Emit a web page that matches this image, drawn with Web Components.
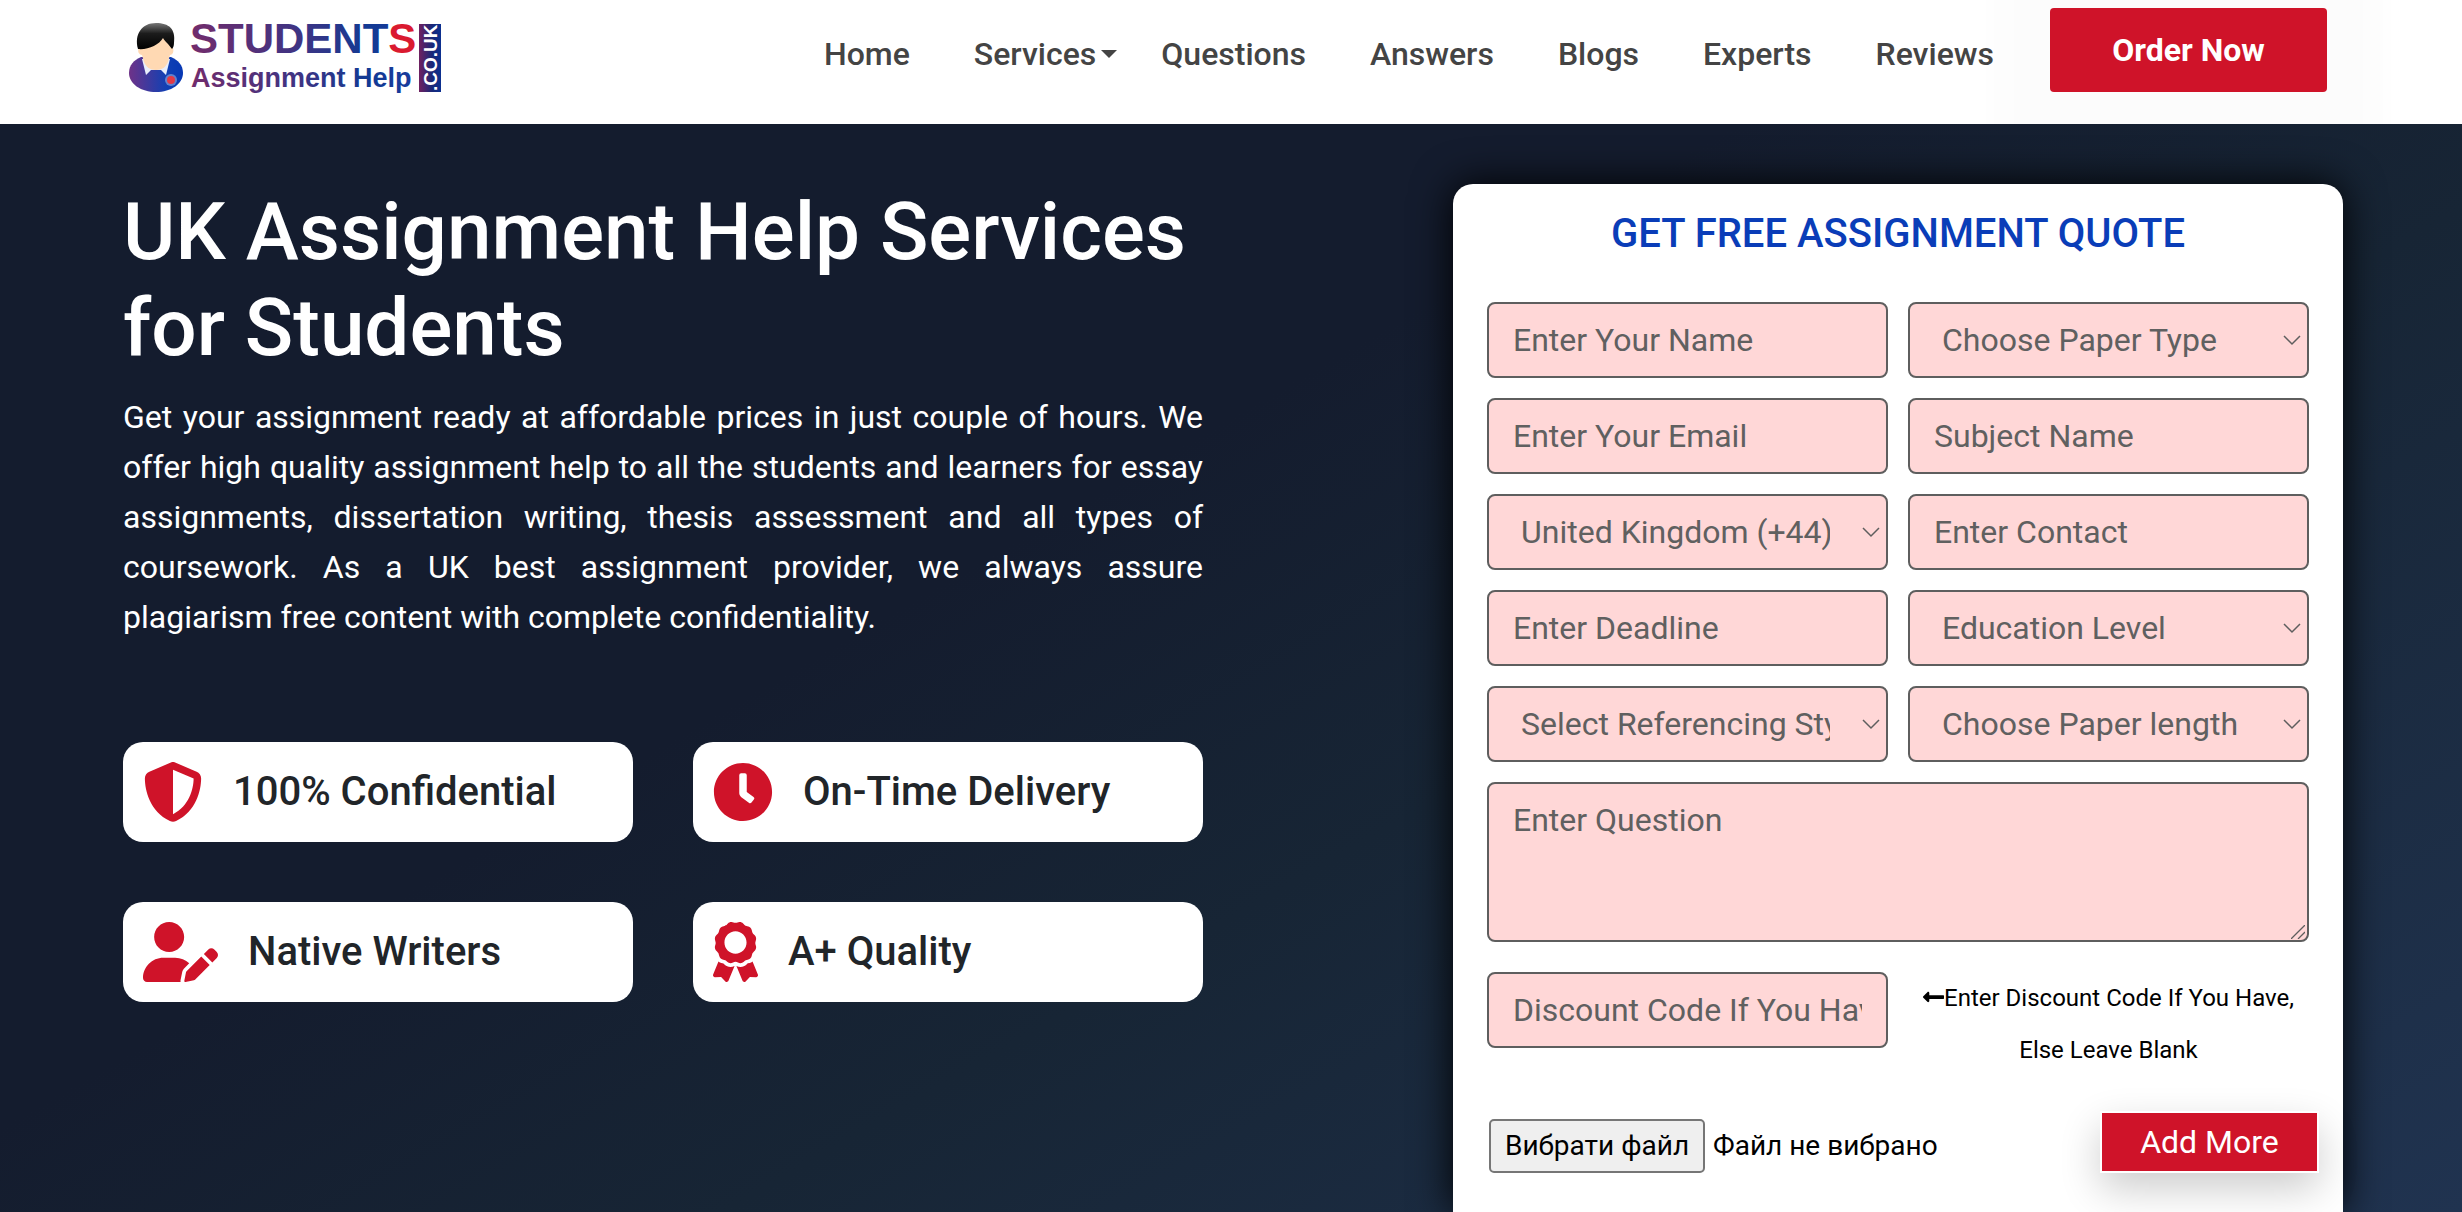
<!DOCTYPE html>
<html lang="en">
<head>
  <meta charset="utf-8">
  <meta name="viewport" content="width=device-width, initial-scale=1">
  <title>UK Assignment Help Services for Students</title>
  <style>
    :root {
      --red: #cf1329;
      --blue: #0a3db8;
      --ink: #212529;
      --field: #ffd7d7;
      --field-line: #5e5e5e;
    }
    body {
      margin: 0;
      min-height: 100vh;
      display: flex;
      flex-direction: column;
      font-family: Roboto, "Liberation Sans", sans-serif;
      background: #fff;
    }
  </style>
</head>
<body>
  <site-header>
    <nav-link href="#home">Home</nav-link>
    <nav-link href="#services" caret>Services</nav-link>
    <nav-link href="#questions">Questions</nav-link>
    <nav-link href="#answers">Answers</nav-link>
    <nav-link href="#blogs">Blogs</nav-link>
    <nav-link href="#experts">Experts</nav-link>
    <nav-link href="#reviews">Reviews</nav-link>
  </site-header>

  <hero-section>
    <span slot="title">UK Assignment Help Services for Students</span>
    <span slot="text">Get your assignment ready at affordable prices in just couple of hours. We offer high quality assignment help to all the students and learners for essay assignments, dissertation writing, thesis assessment and all types of coursework. As a UK best assignment provider, we always assure plagiarism free content with complete confidentiality.</span>
    <feature-card slot="features" icon="shield">100% Confidential</feature-card>
    <feature-card slot="features" icon="clock">On-Time Delivery</feature-card>
    <feature-card slot="features" icon="writer">Native Writers</feature-card>
    <feature-card slot="features" icon="award">A+ Quality</feature-card>
    <quote-form slot="form"></quote-form>
  </hero-section>

  <script>
    const icons = {
      shield: {
        width: 512,
        path: 'M256 0c4.6 0 9.2 1 13.4 2.9L457.7 82.8c22 9.3 38.4 31 38.3 57.2c-.5 99.2-41.3 280.7-213.6 363.2c-16.7 8-36.1 8-52.8 0C57.3 420.7 16.5 239.2 16 140c-.1-26.2 16.3-47.9 38.3-57.2L242.7 2.9C246.8 1 251.4 0 256 0zm0 66.8V444.8C394 378 431.1 230.1 432 141.4L256 66.8z'
      },
      clock: {
        width: 512,
        path: 'M256 8C119 8 8 119 8 256S119 504 256 504 504 393 504 256 393 8 256 8zm92.49 313l-20 25a16 16 0 0 1-22.49 2.5l-67-49.72a40 40 0 0 1-15-31.23V112a16 16 0 0 1 16-16h32a16 16 0 0 1 16 16V256l58 42.5a16 16 0 0 1 2.49 22.5z'
      },
      writer: {
        width: 640,
        path: 'M223.1 256c70.7 0 128-57.3 128-128s-57.3-128-128-128C152.4 0 95.1 57.3 95.1 128S152.4 256 223.1 256zM274.7 304H173.3C77.61 304 0 381.7 0 477.4C0 496.5 15.52 512 34.66 512h286.4c-1.246-5.531-1.43-11.31-.2832-17.04l14.28-71.41c1.943-9.723 6.676-18.56 13.68-25.56l45.72-45.72C363.3 322.4 321.2 304 274.7 304zM371.8 420.4c-2.514 2.512-4.227 5.715-4.924 9.203l-14.28 71.41c-1.258 6.289 4.293 11.84 10.59 10.59l71.42-14.29c3.482-.6992 6.682-2.406 9.195-4.922l125.3-125.3l-72.01-72.01L371.8 420.4zM629.5 255.7l-21.1-21.11c-14.06-14.06-36.85-14.06-50.91 0l-38.13 38.14l72.01 72.01l38.13-38.13C643.5 292.5 643.5 269.7 629.5 255.7z'
      },
      award: {
        width: 384,
        path: 'M97.12 362.63c-8.69-8.69-4.16-6.24-25.12-11.85-9.51-2.55-17.87-7.45-25.43-13.32L1.2 448.7c-4.39 10.77 3.81 22.47 15.43 22.03l52.69-2.01L105.56 507c8 8.44 22.04 5.81 26.43-4.96l52.05-127.62c-10.84 6.04-22.87 9.58-35.31 9.58-19.5 0-37.82-7.59-51.61-21.37zM382.8 448.7l-45.37-111.24c-7.56 5.88-15.92 10.77-25.43 13.32-21.07 5.64-16.45 3.18-25.12 11.85-13.79 13.78-32.12 21.37-51.62 21.37-12.44 0-24.47-3.55-35.31-9.58L252 502.04c4.39 10.77 18.44 13.4 26.43 4.96l36.25-38.28 52.69 2.01c11.62.44 19.82-11.27 15.43-22.03zM263 340c15.28-15.55 17.03-14.21 38.79-20.14 13.89-3.79 24.75-14.84 28.47-28.98 7.48-28.4 5.54-24.97 25.95-45.75 10.17-10.35 14.14-25.44 10.42-39.58-7.47-28.38-7.48-24.42 0-52.83 3.72-14.14-.25-29.23-10.42-39.58-20.41-20.78-18.47-17.36-25.95-45.75-3.72-14.14-14.58-25.19-28.47-28.98-27.88-7.61-24.52-5.62-44.95-26.41-10.17-10.35-25-14.4-38.89-10.61-27.87 7.6-23.98 7.61-51.9 0-13.89-3.79-28.72.25-38.89 10.61-20.41 20.78-17.05 18.8-44.94 26.41-13.89 3.79-24.75 14.84-28.47 28.98-7.47 28.39-5.54 24.97-25.95 45.75-10.17 10.35-14.15 25.44-10.42 39.58 7.47 28.36 7.48 24.4 0 52.82-3.72 14.14.25 29.23 10.42 39.59 20.41 20.78 18.47 17.35 25.95 45.75 3.72 14.14 14.58 25.19 28.47 28.98C104.6 325.96 106.27 325 121 340c13.23 13.47 33.84 15.88 49.74 5.82a39.676 39.676 0 0 1 42.53 0c15.89 10.06 36.5 7.65 49.73-5.82zM97.66 175.96c0-53.03 42.24-96.02 94.34-96.02s94.34 42.99 94.34 96.02-42.24 96.02-94.34 96.02-94.34-42.99-94.34-96.02z'
      }
    };

    // Shared base: every element renders its template into an open shadow root
    class BaseElement extends HTMLElement {

      constructor() {

        super();
        this.attachShadow({ mode: 'open' });
      }

      connectedCallback() {

        const template = document.createElement('template');
        template.innerHTML = `
          <style>
            * { box-sizing: border-box; }
            ${this.getStyle()}
          </style>
          ${this.getMarkup()}
        `;
        this.shadowRoot.replaceChildren(template.content.cloneNode(true));
      }
    }

    class SiteLogo extends BaseElement {

      getStyle() {

        return `
          :host { display: block; }
          a { display: block; }
          svg { display: block; overflow: visible; }
          text { font-family: "Liberation Sans", Arial, sans-serif; font-weight: 700; }
        `;
      }

      getMarkup() {

        return `
          <a href="#home" aria-label="Students Assignment Help">
            <svg width="324" height="96" viewBox="0 -12 324 96">
              <defs>
                <linearGradient id="word" gradientUnits="userSpaceOnUse" x1="68" y1="0" x2="290" y2="0">
                  <stop offset="0" stop-color="#722c6c"/>
                  <stop offset=".5" stop-color="#3c3484"/>
                  <stop offset=".8" stop-color="#123a94"/>
                  <stop offset="1" stop-color="#1a3a9c"/>
                </linearGradient>
                <linearGradient id="coat">
                  <stop offset="0" stop-color="#6e3288"/>
                  <stop offset=".7" stop-color="#1040b4"/>
                  <stop offset="1" stop-color="#0838b4"/>
                </linearGradient>
                <linearGradient id="tag">
                  <stop offset="0" stop-color="#702060"/>
                  <stop offset=".6" stop-color="#182878"/>
                  <stop offset="1" stop-color="#0c3090"/>
                </linearGradient>
                <linearGradient id="hair" x1="0" y1="0" x2="0" y2="1">
                  <stop offset="0" stop-color="#777"/>
                  <stop offset=".4" stop-color="#1c1c1c"/>
                  <stop offset="1" stop-color="#000"/>
                </linearGradient>
              </defs>
              <path d="M6 53C6 45 11 40 18 37H48C55 40 60 45 60 53C60 64 48 72 33 72S6 64 6 53z" fill="url(#coat)"/>
              <path d="M19 39l4 16 5-5h10l5 5 4-16z" fill="#e8eefc"/>
              <path d="M16 28c-2 3 0 7 3 7l2 7c2 5 6 8 12 8s10-3 12-8l2-7c3 0 4-4 3-7l-4-12H20z" fill="#ffd9b3"/>
              <path d="M15 29C11 14 19 3 33 3c13 0 20 6 18 20 0 3-1 5-2 6l-4-5c-2-2-4-4-5-6-4 7-15 12-25 11z" fill="url(#hair)"/>
              <circle cx="48" cy="60" r="6" fill="#fff" opacity=".35"/>
              <circle cx="48" cy="60" r="4" fill="#e23a48"/>
              <text x="67" y="33" font-size="42" fill="url(#word)">STUDENT<tspan fill="#da1a30">S</tspan></text>
              <text x="68" y="67" font-size="27" fill="url(#word)">Assignment Help</text>
              <rect x="296" y="4" width="22" height="68" fill="url(#tag)"/>
              <text transform="translate(314 71) rotate(-90)" font-size="19" fill="#fff">.CO.UK</text>
            </svg>
          </a>
        `;
      }
    }

    class NavLink extends BaseElement {

      getStyle() {

        return `
          :host { display: block; }
          a {
            display: flex;
            align-items: center;
            padding: 0 32px;
            color: #444;
            font-size: 32px;
            font-weight: 500;
            line-height: 48px;
            text-decoration: none;
          }
          :host([caret]) a { gap: 5px; padding-right: 12px; }
          :host([caret]) a::after {
            content: "";
            border: 8px solid transparent;
            border-top-color: #444;
            border-bottom: 0;
          }
        `;
      }

      getMarkup() {

        return `<a href="${this.getAttribute('href')}"><slot></slot></a>`;
      }
    }

    class SiteHeader extends BaseElement {

      getStyle() {

        return `
          :host { display: block; background: #fff; }
          header {
            display: flex;
            align-items: flex-start;
            min-height: 124px;
            padding: 8px 135px 0 123px;
            overflow: hidden;
          }
          nav { display: flex; margin: 22px 24px 0 auto; }
          button {
            width: 277px;
            height: 84px;
            border: 0;
            border-radius: 4px;
            background: var(--red);
            color: #fff;
            font: 700 32px/48px Roboto, sans-serif;
            box-shadow: 0 16px 20px 60px rgba(0, 0, 0, .01);
          }
        `;
      }

      getMarkup() {

        return `
          <header>
            <site-logo></site-logo>
            <nav><slot></slot></nav>
            <button type="button">Order Now</button>
          </header>
        `;
      }
    }

    class HeroSection extends BaseElement {

      getStyle() {

        return `
          :host {
            display: flex;
            flex: 1;
            background: linear-gradient(150deg, #141c2e 40%, #172535 60%, #203350);
          }
          section {
            flex: 1;
            display: grid;
            grid-template-columns: 1080fr 890fr;
            gap: 250px;
            padding: 60px 119px 0 123px;
            color: #fff;
          }
          h1 {
            margin: 0 0 16px;
            font-size: 80px;
            font-weight: 500;
            line-height: 96px;
          }
          p {
            margin: 0;
            font-size: 32px;
            line-height: 50px;
            text-align: justify;
          }
          .features {
            display: grid;
            grid-template-columns: 1fr 1fr;
            gap: 60px;
            margin-top: 100px;
          }
          .form { display: grid; }
        `;
      }

      getMarkup() {

        return `
          <section>
            <div>
              <h1><slot name="title"></slot></h1>
              <p><slot name="text"></slot></p>
              <div class="features"><slot name="features"></slot></div>
            </div>
            <div class="form"><slot name="form"></slot></div>
          </section>
        `;
      }
    }

    class FeatureCard extends BaseElement {

      getStyle() {

        return `
          :host {
            display: flex;
            align-items: center;
            gap: 30px;
            min-height: 100px;
            padding: 0 20px;
            box-sizing: border-box;
            border-radius: 20px;
            background: #fff;
            color: var(--ink);
            font-size: 40px;
            font-weight: 500;
            line-height: 48px;
          }
          svg { height: 60px; fill: var(--red); }
        `;
      }

      getMarkup() {

        const icon = icons[this.getAttribute('icon')];

        return `
          <svg viewBox="0 0 ${icon.width} 512" aria-hidden="true"><path d="${icon.path}"/></svg>
          <span><slot></slot></span>
        `;
      }
    }

    const fieldStyle = `
      :host { display: grid; }
      input, select, textarea {
        grid-area: 1 / 1;
        width: 100%;
        min-width: 0;
        height: 76px;
        margin: 0;
        padding: 12px 24px;
        border: 2px solid var(--field-line);
        border-radius: 8px;
        background: var(--field);
        color: #606060;
        font: 400 32px/48px Roboto, sans-serif;
      }
      ::placeholder { color: #606060; opacity: 1; }
    `;

    class TextField extends BaseElement {

      getStyle() {

        return `
          ${fieldStyle}
          textarea { height: 160px; resize: none; }
          svg {
            grid-area: 1 / 1;
            place-self: end;
            margin: 0 4px 3px 0;
            pointer-events: none;
          }
        `;
      }

      getMarkup() {

        const label = this.getAttribute('label');

        if(this.hasAttribute('multiline')) {

          return `
            <textarea placeholder="${label}" aria-label="${label}"></textarea>
            <svg width="14" height="14" viewBox="0 0 14 14" fill="none" stroke="#5e5e5e" stroke-width="1.3" aria-hidden="true"><path d="M0 14L14 0M7 14l7-7"/></svg>
          `;
        }
        return `<input type="${this.getAttribute('type') || 'text'}" placeholder="${label}" aria-label="${label}">`;
      }
    }

    class SelectField extends BaseElement {

      getStyle() {

        return `
          ${fieldStyle}
          select { appearance: none; padding: 0 56px 0 32px; }
          svg {
            grid-area: 1 / 1;
            place-self: center end;
            margin-right: 8px;
            pointer-events: none;
          }
        `;
      }

      getMarkup() {

        const label = this.getAttribute('label');

        return `
          <select aria-label="${label}"><option>${label}</option></select>
          <svg width="18" height="12" viewBox="0 0 18 12" fill="none" stroke="#5e5e5e" stroke-width="1.5" aria-hidden="true"><path d="M1 2l8 8 8-8"/></svg>
        `;
      }
    }

    class FilePicker extends BaseElement {

      getStyle() {

        return `
          :host { display: block; }
          label {
            display: flex;
            align-items: center;
            gap: 8px;
            position: relative;
            color: #000;
            font-size: 28px;
            line-height: 38px;
          }
          input {
            position: absolute;
            width: 100%;
            height: 100%;
            margin: 0;
            opacity: 0;
          }
          .button {
            padding: 6px 14px;
            border: 2px solid #767676;
            border-radius: 5px;
            background: #efefef;
          }
        `;
      }

      getMarkup() {

        return `
          <label lang="uk">
            <input type="file">
            <span class="button">Вибрати файл</span>
            <span>Файл не вибрано</span>
          </label>
        `;
      }
    }

    class QuoteForm extends BaseElement {

      getStyle() {

        return `
          :host {
            display: block;
            padding: 26px 34px 38px;
            border-radius: 20px 20px 0 0;
            background: #fff;
            box-shadow: 0 0 40px #000;
            box-sizing: border-box;
          }
          h2 {
            margin: 0 0 44px;
            color: var(--blue);
            font-size: 40px;
            font-weight: 500;
            line-height: 48px;
            text-align: center;
          }
          .fields, .discount {
            display: grid;
            grid-template-columns: repeat(2, minmax(0, 1fr));
            gap: 20px;
          }
          .wide { grid-column: 1 / -1; }
          .discount { align-items: start; margin-top: 30px; }
          .discount p {
            margin: 0;
            color: #000;
            font-size: 24px;
            line-height: 52px;
            text-align: center;
          }
          .discount svg { width: 21px; height: 24px; vertical-align: -3px; }
          .upload {
            display: flex;
            justify-content: space-between;
            align-items: flex-end;
            margin: 35px -10px 0 2px;
          }
          .upload button {
            width: 219px;
            height: 62px;
            border: 2px solid #fff;
            padding: 0;
            background: var(--red);
            color: #fff;
            font: 400 32px/48px Roboto, sans-serif;
            box-shadow: 0 16px 40px rgba(0, 0, 0, .2);
          }
        `;
      }

      getMarkup() {

        return `
          <form>
            <h2>GET FREE ASSIGNMENT QUOTE</h2>
            <div class="fields">
              <text-field label="Enter Your Name"></text-field>
              <select-field label="Choose Paper Type"></select-field>
              <text-field label="Enter Your Email" type="email"></text-field>
              <text-field label="Subject Name"></text-field>
              <select-field label="United Kingdom (+44)"></select-field>
              <text-field label="Enter Contact" type="tel"></text-field>
              <text-field label="Enter Deadline"></text-field>
              <select-field label="Education Level"></select-field>
              <select-field label="Select Referencing Style"></select-field>
              <select-field label="Choose Paper length"></select-field>
              <text-field class="wide" label="Enter Question" multiline></text-field>
            </div>
            <div class="discount">
              <text-field label="Discount Code If You Have"></text-field>
              <p><svg viewBox="0 0 448 512" aria-hidden="true"><path d="M134.059 296H436c6.627 0 12-5.373 12-12v-56c0-6.627-5.373-12-12-12H134.059v-46.059c0-21.382-25.851-32.09-40.971-16.971L7.029 239.029c-9.373 9.373-9.373 24.569 0 33.941l86.059 86.059c15.119 15.119 40.971 4.411 40.971-16.971V296z"/></svg>Enter Discount Code If You Have, Else Leave Blank</p>
            </div>
            <div class="upload">
              <file-picker></file-picker>
              <button type="button">Add More</button>
            </div>
          </form>
        `;
      }
    }

    customElements.define('site-logo', SiteLogo);
    customElements.define('nav-link', NavLink);
    customElements.define('site-header', SiteHeader);
    customElements.define('feature-card', FeatureCard);
    customElements.define('text-field', TextField);
    customElements.define('select-field', SelectField);
    customElements.define('file-picker', FilePicker);
    customElements.define('quote-form', QuoteForm);
    customElements.define('hero-section', HeroSection);
  </script>
</body>
</html>
